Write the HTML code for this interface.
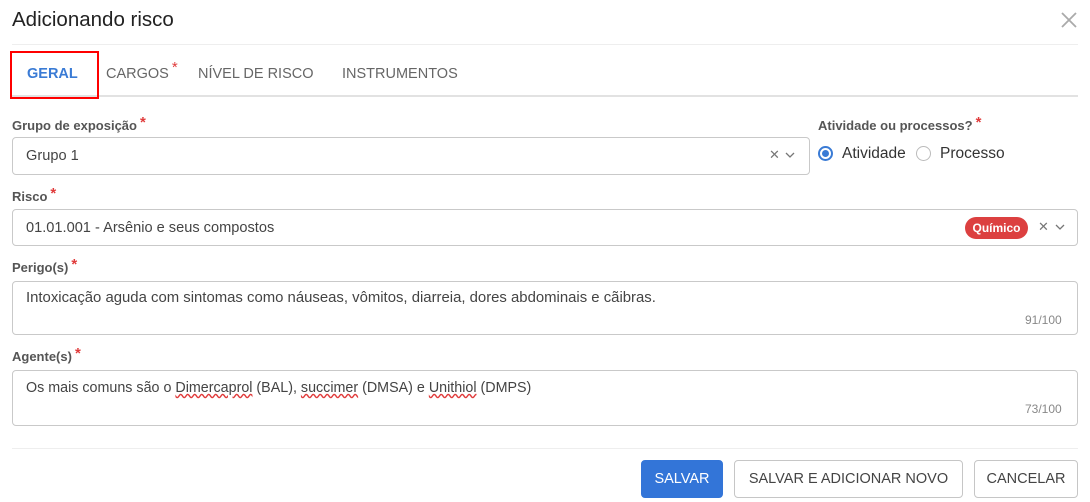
<!DOCTYPE html>
<html><head><meta charset="utf-8"><style>
*{box-sizing:border-box;margin:0;padding:0}
body{width:1090px;height:502px;background:#fff;font-family:"Liberation Sans",sans-serif;color:#333;position:relative;overflow:hidden}
.a{position:absolute;white-space:nowrap}
.lbl{font-size:13px;font-weight:bold;color:#555;line-height:16px}
.req{color:#e03b3b;font-size:15px;position:relative;top:-3px;margin-left:3px;line-height:0}
.box{position:absolute;border:1px solid #c9c9c9;border-radius:4px;background:#fff}
.txt{font-size:14.6px;color:#444}
.tab{font-size:14.5px;color:#666;top:66px;line-height:17px}
.btn{position:absolute;top:460px;height:38px;border:1px solid #c6c6c6;border-radius:4px;font-size:14.5px;color:#444;display:flex;align-items:center;justify-content:center}
.cnt{font-size:12px;color:#888}
</style></head><body>
<div class="a" style="left:12px;top:8px;font-size:20.5px;color:#222">Adicionando risco</div>
<svg class="a" style="left:1061px;top:12px" width="16" height="16" viewBox="0 0 16 16"><path d="M1 1L15 15M15 1L1 15" stroke="#aaa" stroke-width="1.8"/></svg>
<div class="a" style="left:12px;top:44px;width:1066px;height:1px;background:#eee"></div>

<div class="a" style="left:12px;top:95px;width:1066px;height:2px;background:#e2e2e2"></div>
<div class="a" style="left:10px;top:51px;width:89px;height:48px;border:2px solid #f00"></div>
<div class="a tab" style="left:27px;color:#3a7bd5;font-weight:bold">GERAL</div>
<div class="a tab" style="left:106px">CARGOS<span class="req" style="top:-6px">*</span></div>
<div class="a tab" style="left:198px">NÍVEL DE RISCO</div>
<div class="a tab" style="left:342px">INSTRUMENTOS</div>

<div class="a lbl" style="left:12px;top:118px">Grupo de exposição<span class="req">*</span></div>
<div class="box" style="left:12px;top:137px;width:798px;height:38px"></div>
<div class="a txt" style="left:26px;top:148px">Grupo 1</div>
<div class="a" style="left:769px;top:147px;font-size:13px;color:#777">✕</div>
<svg class="a" style="left:785px;top:152px" width="10" height="7" viewBox="0 0 10 7"><path d="M1 1L5 5L9 1" stroke="#777" fill="none" stroke-width="1.3"/></svg>

<div class="a lbl" style="left:818px;top:118px">Atividade ou processos?<span class="req">*</span></div>
<div class="a" style="left:818px;top:146px;width:15px;height:15px;border:2px solid #3a7bd5;border-radius:50%"></div>
<div class="a" style="left:822px;top:150px;width:7px;height:7px;background:#3a7bd5;border-radius:50%"></div>
<div class="a" style="left:842px;top:145px;font-size:15.5px;color:#333">Atividade</div>
<div class="a" style="left:916px;top:146px;width:15px;height:15px;border:1.5px solid #bbb;border-radius:50%"></div>
<div class="a" style="left:940px;top:145px;font-size:15.5px;color:#333">Processo</div>

<div class="a lbl" style="left:12px;top:189px">Risco<span class="req">*</span></div>
<div class="box" style="left:12px;top:209px;width:1066px;height:37px"></div>
<div class="a txt" style="left:26px;top:220px">01.01.001 - Arsênio e seus compostos</div>
<div class="a" style="left:965px;top:217px;width:63px;height:22px;background:#dc4040;border-radius:11px;color:#fff;font-size:12px;font-weight:bold;text-align:center;line-height:22px">Químico</div>
<div class="a" style="left:1038px;top:219px;font-size:13px;color:#777">✕</div>
<svg class="a" style="left:1055px;top:224px" width="10" height="7" viewBox="0 0 10 7"><path d="M1 1L5 5L9 1" stroke="#777" fill="none" stroke-width="1.3"/></svg>

<div class="a lbl" style="left:12px;top:260px">Perigo(s)<span class="req">*</span></div>
<div class="box" style="left:12px;top:281px;width:1066px;height:54px"></div>
<div class="a txt" style="left:26px;top:290px;font-size:14.9px">Intoxicação aguda com sintomas como náuseas, vômitos, diarreia, dores abdominais e cãibras.</div>
<div class="a cnt" style="left:1025px;top:313px">91/100</div>

<div class="a lbl" style="left:12px;top:349px">Agente(s)<span class="req">*</span></div>
<div class="box" style="left:12px;top:370px;width:1066px;height:56px"></div>
<div class="a txt" style="left:26px;top:380px;font-size:14.3px">Os mais comuns são o <span style="text-decoration:underline wavy #e03b3b">Dimercaprol</span> (BAL), <span style="text-decoration:underline wavy #e03b3b">succimer</span> (DMSA) e <span style="text-decoration:underline wavy #e03b3b">Unithiol</span> (DMPS)</div>
<div class="a cnt" style="left:1025px;top:402px">73/100</div>

<div class="a" style="left:12px;top:448px;width:1066px;height:1px;background:#eee"></div>
<div class="btn" style="left:641px;width:82px;background:#3375d8;border-color:#3375d8;color:#fff">SALVAR</div>
<div class="btn" style="left:734px;width:229px">SALVAR E ADICIONAR NOVO</div>
<div class="btn" style="left:974px;width:104px">CANCELAR</div>
</body></html>
